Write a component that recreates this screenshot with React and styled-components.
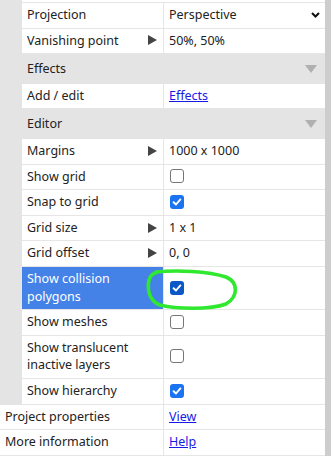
import styled, { createGlobalStyle } from "styled-components";

const GlobalStyle = createGlobalStyle`
  html, body {
    margin: 0;
    padding: 0;
    background: #fff;
  }
  body {
    font-family: "Noto Sans", "Open Sans", sans-serif;
    font-size: 12.5px;
    color: #222;
  }
`;

const LINE = "#e6e6e6";
const STRIP = "#e4e4e4";

const Frame = styled.div`
  display: flex;
  width: 331px;
  height: 456px;
  overflow: hidden;
`;

const Sheet = styled.div`
  flex: 1;
  display: flex;
  flex-direction: column;
`;

const Scrollbar = styled.div`
  width: 6px;
  background: #cdcdcd;
`;

const TopStub = styled.div`
  height: 2px;
  background: #fff;
  border-bottom: 1px solid ${LINE};
`;

const Group = styled.div`
  background: ${STRIP};
  padding-left: 22px;
  display: flex;
  flex-direction: column;
`;

const Row = styled.div`
  display: grid;
  grid-template-columns: ${(p) => p.$labelWidth}px 1fr;
  background: #fff;
  border-bottom: 1px solid ${LINE};
  line-height: 17.6px;
`;

const Label = styled.div`
  display: flex;
  align-items: center;
  justify-content: space-between;
  padding: 3px 6px 4px 5px;
  border-right: 1px solid ${LINE};
  background: ${(p) => (p.$selected ? "#4482e8" : "transparent")};
  color: ${(p) => (p.$selected ? "#fff" : "inherit")};
`;

const Value = styled.div`
  position: relative;
  display: flex;
  align-items: center;
  justify-content: space-between;
  padding: 3px 5px 4px 5px;
`;

const Arrow = styled.span`
  width: 0;
  height: 0;
  border-top: 5px solid transparent;
  border-bottom: 5px solid transparent;
  border-left: 9px solid #444;
  flex-shrink: 0;
`;

const Header = styled.div`
  display: flex;
  align-items: center;
  justify-content: space-between;
  padding: 6px 8px 6px 5px;
  line-height: 17.6px;
  background: ${STRIP};
`;

const HeaderCaret = styled.span`
  width: 0;
  height: 0;
  border-left: 6px solid transparent;
  border-right: 6px solid transparent;
  border-top: 8px solid #b0b0b0;
`;

const Link = styled.a`
  color: #1a1ae6;
  text-decoration: underline;
  cursor: pointer;
`;

const Chevron = styled.svg`
  width: 9px;
  height: 6px;
`;

const Box = styled.span`
  box-sizing: border-box;
  display: inline-flex;
  align-items: center;
  justify-content: center;
  width: 14px;
  height: 14px;
  margin-left: 1px;
  border-radius: 3px;
  border: 1px solid ${(p) => (p.$checked ? "transparent" : "#767676")};
  background: ${(p) =>
    p.$checked ? (p.$focus ? "#0b57c6" : "#1a73f0") : "#fff"};
`;

const Scribble = styled.svg`
  position: absolute;
  left: -18px;
  top: 2px;
  width: 92px;
  height: 42px;
  overflow: visible;
  pointer-events: none;
`;

const Checkbox = ({ checked, focus }) => (
  <Box $checked={checked} $focus={focus}>
    {checked && (
      <svg width="10" height="10" viewBox="0 0 10 10">
        <path
          d="M1.6 5.2 L4 7.5 L8.4 2.4"
          fill="none"
          stroke="#fff"
          strokeWidth="1.9"
          strokeLinecap="round"
          strokeLinejoin="round"
        />
      </svg>
    )}
  </Box>
);

const Prop = ({ label, arrow, selected, width = 142, children }) => (
  <Row $labelWidth={width}>
    <Label $selected={selected}>
      <span>{label}</span>
      {arrow && <Arrow />}
    </Label>
    <Value>{children}</Value>
  </Row>
);

const Section = ({ title }) => (
  <Header>
    <span>{title}</span>
    <HeaderCaret />
  </Header>
);

export default function App() {
  return (
    <>
      <GlobalStyle />
      <Frame>
        <Sheet>
          <Group>
            <TopStub />
            <Prop label="Projection">
              <span>Perspective</span>
              <Chevron viewBox="0 0 9 6">
                <path
                  d="M1 1 L4.5 4.5 L8 1"
                  fill="none"
                  stroke="#111"
                  strokeWidth="2"
                />
              </Chevron>
            </Prop>
            <Prop label="Vanishing point" arrow>
              <span>50%, 50%</span>
            </Prop>
            <Section title="Effects" />
            <Prop label="Add / edit">
              <Link>Effects</Link>
            </Prop>
            <Section title="Editor" />
            <Prop label="Margins" arrow>
              <span>1000 x 1000</span>
            </Prop>
            <Prop label="Show grid">
              <Checkbox />
            </Prop>
            <Prop label="Snap to grid">
              <Checkbox checked />
            </Prop>
            <Prop label="Grid size" arrow>
              <span>1 x 1</span>
            </Prop>
            <Prop label="Grid offset" arrow>
              <span>0, 0</span>
            </Prop>
            <Prop label="Show collision polygons" selected>
              <Checkbox checked focus />
              <Scribble viewBox="0 0 92 42">
                <path
                  d="M10 3 C30 1 62 2 80 8 C92 13 93 27 80 35 C64 41 30 40 14 36 C3 32 1 20 3 11 C4 7 7 4 12 3"
                  fill="none"
                  stroke="#2fe82f"
                  strokeWidth="3.6"
                  strokeLinecap="round"
                />
              </Scribble>
            </Prop>
            <Prop label="Show meshes">
              <Checkbox />
            </Prop>
            <Prop label="Show translucent inactive layers">
              <Checkbox />
            </Prop>
            <Prop label="Show hierarchy">
              <Checkbox checked />
            </Prop>
          </Group>
          <Prop label="Project properties" width={164}>
            <Link>View</Link>
          </Prop>
          <Prop label="More information" width={164}>
            <Link>Help</Link>
          </Prop>
          <Prop label="" width={164}>
            <span>&nbsp;</span>
          </Prop>
        </Sheet>
        <Scrollbar />
      </Frame>
    </>
  );
}
